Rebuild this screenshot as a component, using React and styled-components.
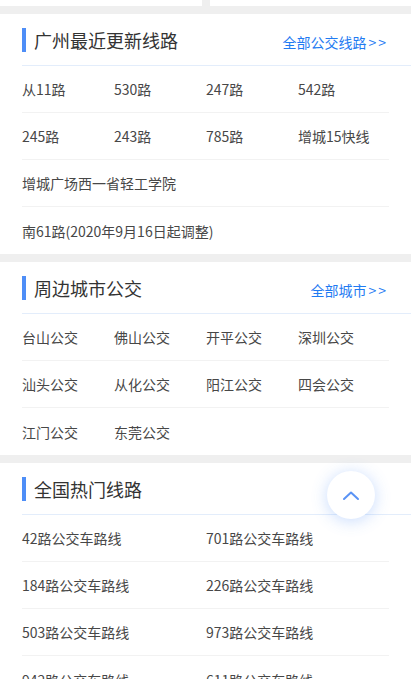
import React from "react";
import styled, { createGlobalStyle } from "styled-components";

const GlobalStyle = createGlobalStyle`
  body {
    margin: 0;
    background: #efefef;
    font-family: "Noto Sans CJK SC", "Noto Sans", sans-serif;
  }
`;

const Page = styled.div`
  width: 411px;
  display: flex;
  flex-direction: column;
  gap: 8px;
`;

const TopStrip = styled.div`
  display: flex;
  gap: 8px;
  height: 6px;
`;

const TopBox = styled.div`
  background: #fff;
  width: ${(p) => p.$w};
  flex: ${(p) => (p.$w ? "none" : 1)};
`;

const Section = styled.section`
  background: #fff;
`;

const Header = styled.div`
  display: flex;
  align-items: center;
  height: 51px;
  margin-left: 22px;
  padding-right: 23px;
  border-bottom: 1px solid #e3edfb;
`;

const Bar = styled.span`
  width: 4px;
  height: 24px;
  background: #4e8ef7;
  margin-right: 8px;
`;

const Title = styled.h2`
  flex: 1;
  margin: 0;
  font-size: 18px;
  font-weight: 400;
  color: #333;
  line-height: 24px;
`;

const More = styled.a`
  font-size: 14px;
  color: #1f7bf2;
  text-decoration: none;
  line-height: 24px;
  margin-top: 4px;
`;

const Arrows = styled.span`
  letter-spacing: 2px;
  margin-left: 2px;
`;

const List = styled.div`
  margin: 0 22px;
`;

const Row = styled.div`
  display: grid;
  grid-template-columns: ${(p) => (p.$cols === 2 ? "184px 184px" : "92px 92px 92px 92px")};
  height: 46px;
  align-items: center;
  border-bottom: 1px solid #f2f2f2;
  &:last-child {
    border-bottom: none;
    height: 47px;
  }
`;

const Item = styled.a`
  font-size: 14px;
  color: #474747;
  text-decoration: none;
  white-space: nowrap;
  grid-column: ${(p) => (p.$wide ? "1 / -1" : "auto")};
`;

const TopButton = styled.button`
  position: fixed;
  left: 327px;
  top: 471px;
  width: 48px;
  height: 48px;
  border-radius: 50%;
  border: none;
  background: #fff;
  box-shadow: 0 2px 16px rgba(70, 135, 250, 0.3);
  display: flex;
  align-items: center;
  justify-content: center;
  padding: 0;
`;

const recent = [
  ["从11路", "530路", "247路", "542路"],
  ["245路", "243路", "785路", "增城15快线"],
  ["增城广场西一省轻工学院"],
  ["南61路(2020年9月16日起调整)"],
];

const cities = [
  ["台山公交", "佛山公交", "开平公交", "深圳公交"],
  ["汕头公交", "从化公交", "阳江公交", "四会公交"],
  ["江门公交", "东莞公交"],
];

const hot = [
  ["42路公交车路线", "701路公交车路线"],
  ["184路公交车路线", "226路公交车路线"],
  ["503路公交车路线", "973路公交车路线"],
  ["942路公交车路线", "611路公交车路线"],
];

const Block = ({ title, more, rows, cols }) => (
  <Section>
    <Header>
      <Bar />
      <Title>{title}</Title>
      {more && (
        <More href="#">
          {more}
          <Arrows>&gt;&gt;</Arrows>
        </More>
      )}
    </Header>
    <List>
      {rows.map((r, i) => (
        <Row key={i} $cols={cols}>
          {r.map((t) => (
            <Item key={t} href="#" $wide={r.length === 1}>
              {t}
            </Item>
          ))}
        </Row>
      ))}
    </List>
  </Section>
);

export default function App() {
  return (
    <>
      <GlobalStyle />
      <Page>
        <TopStrip>
          <TopBox $w="202px" />
          <TopBox />
        </TopStrip>
        <Block title="广州最近更新线路" more="全部公交线路" rows={recent} cols={4} />
        <Block title="周边城市公交" more="全部城市" rows={cities} cols={4} />
        <Block title="全国热门线路" rows={hot} cols={2} />
      </Page>
      <TopButton aria-label="返回顶部">
        <svg width="18" height="11" viewBox="0 0 18 11" fill="none">
          <path d="M2 9 L9 2.5 L16 9" stroke="#5a93f5" strokeWidth="2" strokeLinecap="round" strokeLinejoin="round" />
        </svg>
      </TopButton>
    </>
  );
}
